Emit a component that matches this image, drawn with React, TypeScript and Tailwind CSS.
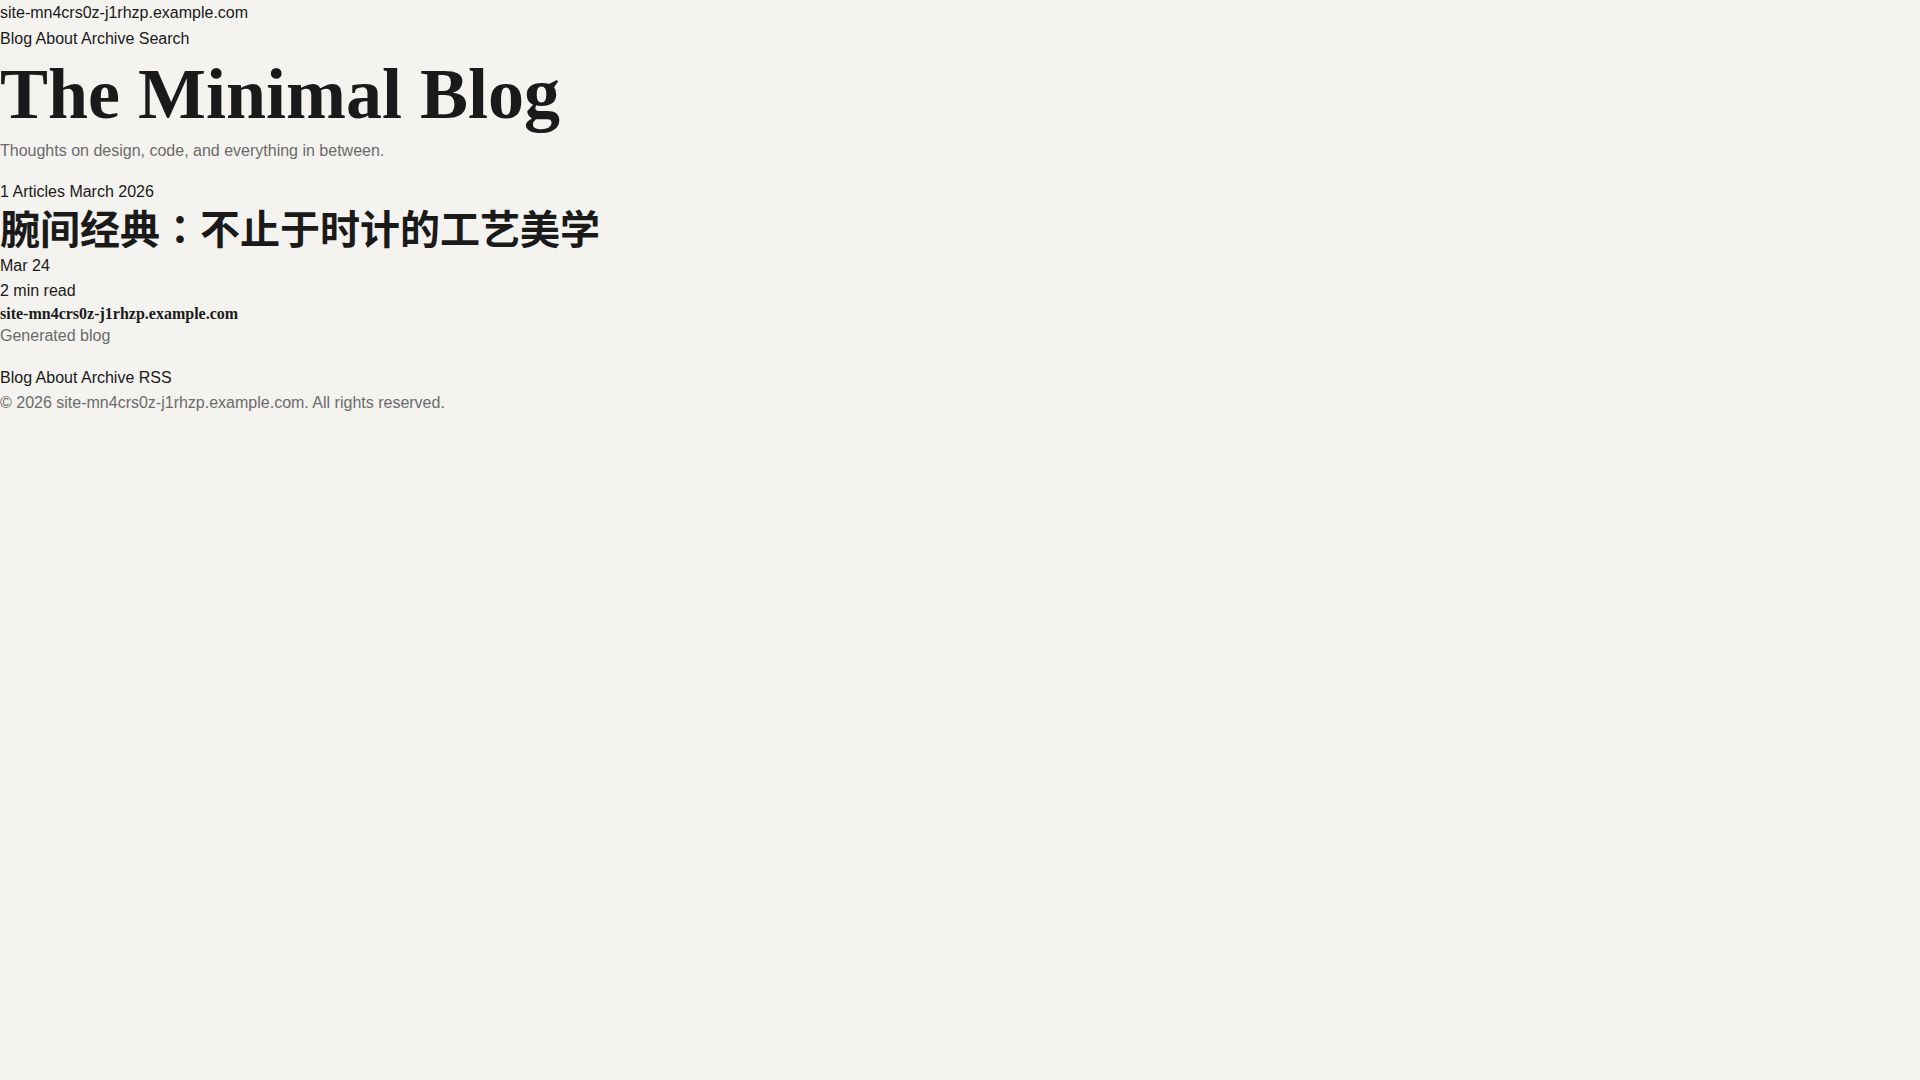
const siteName = "site-mn4crs0z-j1rhzp.example.com";

const navLinks = ["Blog", "About", "Archive", "Search"];
const footerLinks = ["Blog", "About", "Archive", "RSS"];

function LinkRow({ links }: { links: string[] }) {
  return (
    <nav>
      {links.map((l, i) => (
        <span key={l}>
          <a href="#" className="text-[#1a1a1a]">
            {l}
          </a>
          {i < links.length - 1 && " "}
        </span>
      ))}
    </nav>
  );
}

export default function App() {
  return (
    <div className="min-h-screen bg-[#f4f3ef] font-['Liberation_Sans','Noto_Sans_CJK_JP',sans-serif] text-base leading-[1.6] text-[#1a1a1a]">
      <header>
        <div>
          <a href="#">{siteName}</a>
        </div>
        <LinkRow links={navLinks} />
        <h1 className="font-['Liberation_Serif',serif] text-[72px] font-bold leading-[1.2]">
          The Minimal Blog
        </h1>
        <p className="text-[#6b6b6b]">Thoughts on design, code, and everything in between.</p>
      </header>

      <main className="mt-4">
        <div>
          <span>1 Articles</span> <span>March 2026</span>
        </div>
        <article>
          <h2 className="mb-1 font-['Noto_Sans_CJK_JP',sans-serif] text-[40px] font-bold leading-[1.1]">
            腕间经典：不止于时计的工艺美学
          </h2>
          <div>Mar 24</div>
          <div>2 min read</div>
        </article>
      </main>

      <footer>
        <div className="font-['Liberation_Serif',serif] font-bold leading-[1.2]">{siteName}</div>
        <p className="text-[#6b6b6b]">Generated blog</p>
        <div className="mt-4">
          <LinkRow links={footerLinks} />
        </div>
        <p className="text-[#6b6b6b]">© 2026 {siteName}. All rights reserved.</p>
      </footer>
    </div>
  );
}
